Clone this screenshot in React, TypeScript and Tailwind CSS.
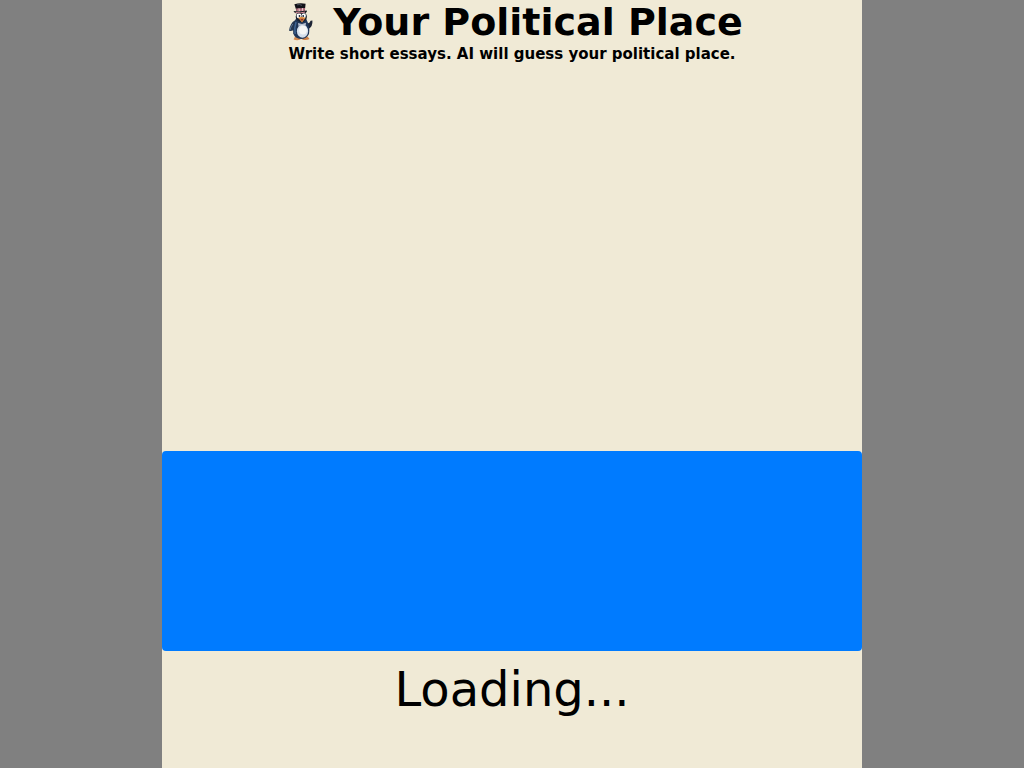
function Penguin() {
  return (
    <svg viewBox="-7 0 40 40" className="size-10 shrink-0" aria-hidden="true">
      {/* feet */}
      <path d="M7 33.5 L12.5 34 L12.3 36.6 Q9 38 5.6 36.5 Z" fill="#d58b50" />
      <path d="M14.5 34 L19.5 33.5 L21.6 36 Q18 37.8 14.2 36.4 Z" fill="#cf8248" />
      {/* raised and lowered wings */}
      <path d="M18 19.5 Q21.5 21.5 22.6 17.8 L24.4 17.6 Q25 23.5 20.5 26 Z" fill="#1d2535" />
      <path d="M8 16.5 Q2 20 1 27.5 Q3.5 29 7 26 Z" fill="#253750" />
      <path d="M4.8 21 Q2.5 24 2 27" stroke="#5c7595" fill="none" />
      {/* body */}
      <path d="M8 15.5 Q13 13 18 15.5 Q22.5 24 21 31 Q18.5 36 13 36 Q7 35.5 5.2 30.5 Q4.5 24 8 15.5 Z" fill="#1f3557" />
      <path d="M8 19 Q6 25 7.2 31" stroke="#3f6592" strokeWidth="1.5" fill="none" />
      <ellipse cx="14.5" cy="28.2" rx="5.6" ry="6.6" fill="#d5dfeb" />
      <ellipse cx="15" cy="27" rx="4" ry="4.6" fill="#f5f6f5" />
      {/* head and face */}
      <ellipse cx="13.3" cy="13.8" rx="5.6" ry="5.4" fill="#18202d" />
      <ellipse cx="11" cy="12.7" rx="2.3" ry="2.6" fill="#fff" />
      <ellipse cx="15.7" cy="12.7" rx="2.2" ry="2.6" fill="#fff" />
      <circle cx="11.5" cy="13" r="0.9" fill="#172536" />
      <circle cx="15.2" cy="13" r="0.9" fill="#172536" />
      <path d="M10.2 14.7 L13.5 13.8 L17.6 14.8 L14 19.4 Z" fill="#e39242" />
      <path d="M12 15.8 L15.8 15.8 L14 18.2 Z" fill="#93362c" />
      {/* bow */}
      <path d="M10 20 L14 21 L18 19.8 L17.5 23 L14 22 L10.5 23 Z" fill="#b8c1cf" />
      {/* top hat */}
      <path d="M6.4 1.2 Q12 -0.3 17.6 0.8 L16.8 8 L8.6 8.2 Z" fill="#111118" />
      <path d="M8 5.4 L17 4.9 L16.8 7.9 L8.6 8.2 Z" fill="#b56f80" />
      <path d="M11 5.3 L11.4 8 M14.5 5.1 L14.4 7.9" stroke="#ead0cd" />
      <path d="M5.5 8 Q12 9 18.8 7.6 Q19.6 9 17.6 10 Q11.5 11 7 10 Z" fill="#17171f" />
      <path d="M7.6 9.5 Q12.5 10.5 17 9.1" stroke="#d8909c" fill="none" />
      <path d="M9 1.8 Q12 1 14 2.4" stroke="#4a505c" fill="none" />
    </svg>
  );
}

export default function App() {
  return (
    <div className="min-h-screen bg-[#808080] font-['DejaVu_Sans',sans-serif] text-black">
      <main className="mx-auto flex min-h-screen w-full max-w-[700px] flex-col bg-[#f0ead6]">
        <header className="flex flex-col items-center text-center">
          <h1 className="flex items-center justify-center gap-3 text-[38px] leading-[45px] font-bold">
            <Penguin />
            <span>Your Political Place</span>
          </h1>
          <p className="text-[15px] leading-[18px] font-bold">
            Write short essays. AI will guess your political place.
          </p>
        </header>
        <section className="mt-[388px]">
          <button
            type="button"
            aria-label="Submit essay"
            className="block h-[200px] w-full rounded bg-[#007bff]"
          />
          <p role="status" className="pt-2.5 text-center text-5xl leading-[56px]">
            Loading...
          </p>
        </section>
      </main>
    </div>
  );
}
